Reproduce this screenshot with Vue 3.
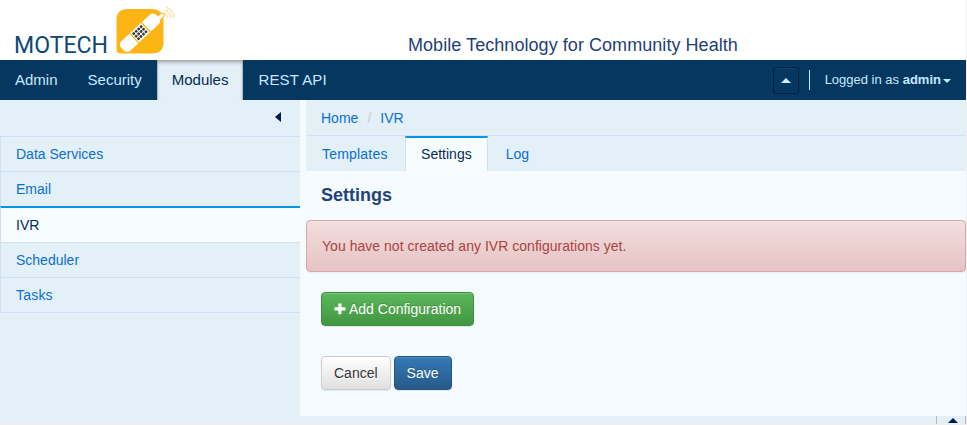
<script setup>
const navItems = ['Admin', 'Security', 'Modules', 'REST API']
const modules = ['Data Services', 'Email', 'IVR', 'Scheduler', 'Tasks']
const tabs = ['Templates', 'Settings', 'Log']
</script>

<template>
  <div class="page">
    <header class="brand">
      <svg class="logo" width="180" height="60" viewBox="0 0 180 60">
        <text class="wordmark" x="14" y="53" textLength="94" lengthAdjust="spacingAndGlyphs">MOTECH</text>
        <path d="M128 9H151Q163.500 9 163.500 21V42Q163.500 53.500 152 53.500H121Q116.500 53.500 116.500 49V20Q116.500 9 128 9Z" fill="#fdb515" />
        <g transform="translate(140 32.700) rotate(-43)">
          <rect x="22" y="0" width="8" height="4.600" rx="2" fill="#fff" stroke="#fdb515" stroke-width="1" />
          <rect x="-24" y="-6.500" width="48" height="13" rx="4.500" fill="#fff" />
          <path d="M-8-6.500V6.500M8-6.500V6.500" stroke="#fdb515" stroke-width="1.200" />
          <g fill="#3d3930">
            <template v-for="r in 3" :key="r">
              <rect v-for="c in 4" :key="c" :x="c * 3.4 - 9.9" :y="r * 3.5 - 8.4" width="2.6" height="2.6" rx=".8" />
            </template>
          </g>
        </g>
        <g fill="none" stroke="#fce3b0" stroke-width="1.500">
          <path d="M164 13Q167 14 167.500 18" />
          <path d="M165 10Q170 11.500 171 18" />
          <path d="M166 7Q173 9.500 174 18" />
        </g>
      </svg>
      <div class="tagline">Mobile Technology for Community Health</div>
    </header>

    <nav class="navbar">
      <a v-for="item in navItems" :key="item" class="nav-item" :class="{ active: item === 'Modules' }">{{ item }}</a>
      <div class="user-area">
        <span class="collapse"><i class="caret up"></i></span>
        <span class="divider"></span>
        <span class="login">Logged in as <b>admin</b></span>
        <i class="caret down"></i>
      </div>
    </nav>

    <div class="body">
      <aside class="sidebar">
        <div class="sidebar-top"><i class="arrow-left"></i></div>
        <a v-for="m in modules" :key="m" class="module" :class="{ active: m === 'IVR' }">{{ m }}</a>
      </aside>
      <main class="content">
        <div class="breadcrumb"><a>Home</a><span>/</span><a>IVR</a></div>
        <div class="tabs">
          <a v-for="t in tabs" :key="t" class="tab" :class="{ active: t === 'Settings' }">{{ t }}</a>
        </div>
        <h1>Settings</h1>
        <div class="alert">You have not created any IVR configurations yet.</div>
        <div class="actions add">
          <button class="btn success">
            <svg width="12" height="12" viewBox="0 0 12 12"><path d="M4.300 .5h3.200v3.700h4v3.200h-4v3.900h-3.200v-3.900H.5V4.200h3.800Z" fill="#fff" /></svg>Add Configuration</button>
        </div>
        <div class="actions">
          <button class="btn plain">Cancel</button>
          <button class="btn primary">Save</button>
        </div>
      </main>
    </div>
    <footer class="footer"><span class="expand"><i class="caret dark"></i></span></footer>
  </div>
</template>

<style>
body { background: #eee; overflow: hidden; }
</style>

<style scoped>
* { box-sizing: border-box; }
.page {
  width: 966px; height: 424px; display: flex; flex-direction: column;
  font: 14px/20px "Liberation Sans", Arial, sans-serif; background: #f5fbff;
}
.brand { height: 60px; flex: none; display: flex; background: #fff; }
.logo { flex: none; }
.wordmark { font: 400 24.500px Roboto, sans-serif; fill: #0c4a73; }
.tagline { margin: 33px 0 0 228px; font-size: 18px; line-height: 25px; letter-spacing: .055px; color: #1f3f77; white-space: nowrap; }
.navbar { height: 40px; flex: none; display: flex; background: #063761; }
.nav-item { padding: 10px 15px; font-size: 15px; color: #c5e9ff; white-space: nowrap; }
.nav-item:nth-child(4) { letter-spacing: .13px; }
.nav-item.active { color: #062b57; background: #e3f0f8; box-shadow: inset 0 3px 4px -1px #999, inset -1px 0 #b7c5cf, inset 1px 0 #b7c5cf; }
.user-area { margin-left: auto; display: flex; align-items: center; padding-right: 15px; font-size: 13px; color: #c5e9ff; }
.collapse { width: 26px; height: 27px; margin-top: 1px; display: grid; place-items: center; border: 1px solid #04213d; border-radius: 3px; box-shadow: inset 0 1px #0a416e; }
.caret { width: 0; height: 0; border: 4px solid transparent; }
.caret.up { border-width: 0 5px 5px; border-bottom-color: #d0efff; }
.caret.down { border-bottom: 0; border-top-color: #c5e9ff; margin: 2px 0 0 2px; }
.divider { width: 1px; height: 20px; margin: 0 15px 0 10px; background: #c5e9ff; }
.login { white-space: nowrap; }
.body { height: 316px; flex: none; display: flex; }
.sidebar { width: 300px; background: #e3f0f8; }
.sidebar-top { height: 36px; display: flex; justify-content: flex-end; padding: 12px 19px 0 0; }
.arrow-left { width: 0; height: 0; border: 5px solid transparent; border-left: 0; border-right-width: 6px; border-right-color: #001a4d; }
.module { display: block; height: 35px; padding: 7px 15px 0; border: solid #d0dff6; border-width: 1px 0 0 1px; color: #0b6fd0; }
.module:last-child { height: 36px; border-bottom-width: 1px; letter-spacing: .2px; }
.module.active { height: 36px; border-top: 2px solid #0594e6; background: #f7fcff; color: #062b57; }
.content { width: 660px; margin-left: 6px; }
.breadcrumb { height: 36px; padding: 8px 15px; display: flex; border-bottom: 1px solid #d0dff6; background: #e3f0f8; color: #0b6fd0; }
.breadcrumb span { width: 22px; text-align: center; color: #ccc; }
.tabs { height: 35px; display: flex; background: #e3f0f8; }
.tab { padding: 8px 17px 0 18px; color: #0b6fd0; }
.tab:first-child { padding-left: 16px; letter-spacing: .2px; }
.tab.active { padding: 6px 15px 0; margin-top: -1px; padding-top: 7px; border: 1px solid #d0dff6; border-top: 2px solid #0594e6; border-bottom: 0; background: #f7fcff; color: #062b57; }
.tab.active { margin-top: 0; padding-top: 6px; margin-left: .5px; }
h1 { height: 49px; margin: 0; padding: 14px 15px 0; font-size: 18px; line-height: 20px; color: #21437a; }
.alert {
  height: 52px; padding: 15px; border: 1px solid #dca7a7; border-radius: 4px; color: #a94442; letter-spacing: .03px;
  background: linear-gradient(#f2dede, #e7c3c3); box-shadow: 0 1px 2px rgba(0, 0, 0, .05), inset 0 1px rgba(255, 255, 255, .25);
}
.actions { display: flex; gap: 3px; padding: 0 15px; }
.actions.add { margin: 20px 0 30px; }
.btn {
  height: 34px; padding: 6px 12px; border: 1px solid; border-radius: 4px; font: inherit; white-space: nowrap;
  display: flex; align-items: center; color: #fff; text-shadow: 0 -1px rgba(0, 0, 0, .2);
  box-shadow: inset 0 1px rgba(255, 255, 255, .15), 0 1px 1px rgba(0, 0, 0, .075);
}
.success { border-color: #3e8f3e; background: linear-gradient(#5cb85c, #419641); }
.success svg { margin-right: 3px; }
.plain { border-color: #ccc; background: linear-gradient(#fff, #e0e0e0); color: #333; text-shadow: 0 1px #fff; }
.primary { border-color: #245580; background: linear-gradient(#337ab7, #265a88); }
.footer { height: 8px; display: flex; justify-content: flex-end; background: #e3f0f8; }
.expand { width: 30px; display: flex; justify-content: center; padding: 2px 0 0 3px; border: solid #b8b8b8; border-width: 0 1px; }
.caret.dark { border-width: 0 5px 5px; border-bottom-color: #001a4d; }
</style>
